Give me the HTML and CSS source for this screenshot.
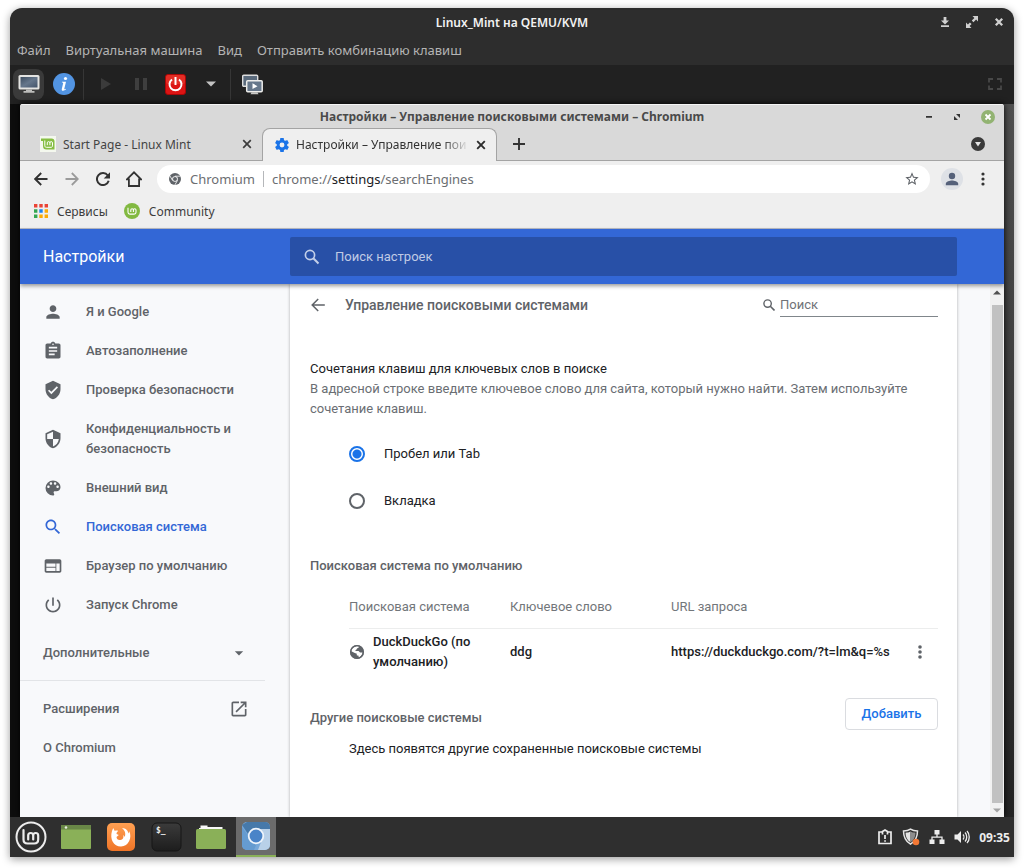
FILE: index.html
```html
<!DOCTYPE html>
<html lang="ru">
<head>
<meta charset="utf-8">
<title>Linux_Mint на QEMU/KVM</title>
<link rel="stylesheet" href="styles.css">
</head>
<body>
<div class="vm">
  <header class="vm-title">
    <h1>Linux_Mint на QEMU/KVM</h1>
    <div class="vm-controls">
      <button aria-label="Свернуть"><svg width="10" height="12" viewBox="0 0 10 12"><path d="M3.6 1h2.8v3.5H9L5 8.6 1 4.500h2.600zM1 9.300h8V11H1z" fill="#d0d0d0"/></svg></button>
      <button aria-label="Развернуть"><svg width="14" height="14" viewBox="0 0 14 14"><path d="M7.500 1H13v5.500l-1.900-1.900-2.700 2.600-1.600-1.600 2.600-2.700zM1 7.500l1.900 1.900 2-2 1.700 1.700-2 2L6.500 13H1z" fill="#d0d0d0"/></svg></button>
      <button aria-label="Закрыть"><svg width="10" height="10" viewBox="0 0 10 10"><path d="M1.800 1.800l6.400 6.400M8.200 1.800L1.800 8.200" stroke="#d0d0d0" stroke-width="2.300"/></svg></button>
    </div>
  </header>
  <nav class="vm-menu">
    <button>Файл</button><button>Виртуальная машина</button><button>Вид</button><button>Отправить комбинацию клавиш</button>
  </nav>
  <div class="vm-tools">
    <button class="tool pressed" aria-label="Консоль"><svg width="22" height="20" viewBox="0 0 22 20"><defs><linearGradient id="scr" x1="0" y1="0" x2="1" y2="1"><stop offset="0" stop-color="#3d4d60"/><stop offset=".5" stop-color="#66778c"/><stop offset="1" stop-color="#44546a"/></linearGradient></defs><rect x=".5" y="1" width="21" height="14.500" rx="1.500" fill="#e4e4e2"/><rect x="2.500" y="3" width="17" height="10.500" fill="url(#scr)"/><path d="M8 15.500h6V17h2.500v1.800h-11V17H8z" fill="#bdbdbb"/></svg></button>
    <button class="tool" aria-label="Сведения"><svg width="22" height="22" viewBox="0 0 22 22"><circle cx="11" cy="11" r="11" fill="#5294e2"/><circle cx="12.500" cy="5.500" r="1.600" fill="#fff"/><path d="M9 8.700h4l-1.700 7c-.2.800.4.800 1.300.1l.4.500c-2 2-4.700 2-4.200-.4l1.400-5.800c.1-.5-.2-.7-1.300-.7z" fill="#fff"/></svg></button>
    <span class="sep"></span>
    <button class="tool" aria-label="Запустить"><svg width="12" height="14" viewBox="0 0 12 14"><path d="M1 1l10 6-10 6z" fill="#3b3b3b"/></svg></button>
    <button class="tool" aria-label="Приостановить"><svg width="12" height="12" viewBox="0 0 12 12"><path d="M0 0h4v12H0zM8 0h4v12H8z" fill="#3f3f3f"/></svg></button>
    <button class="tool" aria-label="Выключить"><svg width="21" height="21" viewBox="0 0 21 21"><rect x=".5" y=".5" width="20" height="20" rx="2.500" fill="#dc1414" stroke="#ac0606"/><rect x="1" y="1" width="19" height="9" rx="2" fill="#e83d31" opacity=".6"/><path d="M7 5.500a6 6 0 1 0 7 0M10.500 3v8" fill="none" stroke="#fff" stroke-width="2"/></svg></button>
    <button class="tool" aria-label="Варианты выключения"><svg width="10" height="6" viewBox="0 0 10 6"><path d="M0 .5h10L5 5.500z" fill="#c3c3c3"/></svg></button>
    <span class="sep"></span>
    <button class="tool" aria-label="Снимки"><svg width="21" height="21" viewBox="0 0 21 21"><rect x=".7" y="1.200" width="15" height="11" rx="1" fill="#5a6a7c" stroke="#ddd" stroke-width="1.400"/><rect x="4.700" y="6.700" width="15.500" height="11" rx="1" fill="#66778b" stroke="#ededeb" stroke-width="1.500"/><path d="M10.500 9.300l5 2.900-5 2.900z" fill="#fff"/><path d="M9.500 18.200h6l1 2h-8z" fill="#c8c8c6"/></svg></button>
    <button class="tool end" aria-label="Полный экран"><svg width="14" height="12" viewBox="0 0 14 12"><path d="M1 4.500V1h4M9 1h4v3.500M13 7.500V11H9M5 11H1V7.500" fill="none" stroke="#484848" stroke-width="1.800"/></svg></button>
  </div>

  <div class="guest">
    <div class="browser">
      <header class="win-title">
        <h2>Настройки – Управление поисковыми системами – Chromium</h2>
        <div class="win-controls">
          <button aria-label="Свернуть"><svg width="8" height="8" viewBox="0 0 8 8"><path d="M1 3h6v1.700H1z" fill="#333"/></svg></button>
          <button aria-label="Развернуть"><svg width="8" height="8" viewBox="0 0 8 8"><path d="M3 1h4v4zM1 3l4 4H1z" fill="#333"/></svg></button>
          <button aria-label="Закрыть"><svg width="14" height="14" viewBox="0 0 14 14"><circle cx="7" cy="7" r="7" fill="#92b372"/><path d="M4.500 4.500l5 5M9.500 4.500l-5 5" stroke="#fff" stroke-width="1.800"/></svg></button>
        </div>
      </header>
      <div class="tabs">
        <div class="tab">
          <svg width="16" height="16" viewBox="0 0 16 16"><rect width="16" height="16" fill="#f4f8ee"/><path d="M1 2.500h10.500a3 3 0 0 1 3 3v8h-8a3.500 3.500 0 0 1-3.500-3.500V5H1z" fill="#86be43"/><path d="M4.800 4.500v5.200c0 1 .6 1.600 1.600 1.600h4.700c.8 0 1.400-.6 1.400-1.500V6.900a1.300 1.300 0 0 0-2.600 0v2.300M9.900 6.900a1.300 1.300 0 0 0-2.600 0v2.300" fill="none" stroke="#fff" stroke-width="1"/></svg>
          <span class="tab-text">Start Page - Linux Mint</span>
          <button aria-label="Закрыть вкладку"><svg width="10" height="10" viewBox="0 0 10 10"><path d="M1.200 1.200l7.600 7.600M8.800 1.200L1.200 8.800" stroke="#3c3c3c" stroke-width="1.700"/></svg></button>
        </div>
        <div class="tab active">
          <svg width="14" height="14" viewBox="2 2 20 20"><path fill="#1a73e8" fill-rule="evenodd" d="M19.430 12.980c.04-.32.07-.64.07-.98s-.03-.66-.07-.98l2.110-1.650c.19-.15.24-.42.12-.64l-2-3.460c-.12-.22-.39-.3-.61-.22l-2.490 1c-.52-.4-1.080-.73-1.690-.98l-.38-2.650C14.460 2.180 14.250 2 14 2h-4c-.25 0-.46.18-.49.42l-.38 2.650c-.61.25-1.170.59-1.690.98l-2.490-1c-.23-.09-.49 0-.61.22l-2 3.460c-.13.22-.07.49.12.64l2.110 1.650c-.04.32-.07.65-.07.98s.03.66.07.98l-2.110 1.650c-.19.15-.24.42-.12.64l2 3.460c.12.22.39.3.61.22l2.490-1c.52.4 1.080.73 1.690.98l.38 2.650c.03.24.24.42.49.42h4c.25 0 .46-.18.49-.42l.38-2.650c.61-.25 1.170-.59 1.690-.98l2.490 1c.23.09.49 0 .61-.22l2-3.460c.12-.22.07-.49-.12-.64zM12 15.500a3.500 3.500 0 1 1 0-7 3.500 3.500 0 0 1 0 7z"/></svg>
          <span class="tab-text">Настройки – Управление пои</span>
          <button aria-label="Закрыть вкладку"><svg width="10" height="10" viewBox="0 0 10 10"><path d="M1.200 1.200l7.600 7.600M8.800 1.200L1.200 8.800" stroke="#2c2c2c" stroke-width="1.900"/></svg></button>
        </div>
        <button class="new-tab" aria-label="Новая вкладка"><svg width="12" height="12" viewBox="0 0 12 12"><path d="M6 0v12M0 6h12" stroke="#333" stroke-width="1.900"/></svg></button>
        <button class="tab-search" aria-label="Поиск вкладок"><svg width="14" height="14" viewBox="0 0 14 14"><circle cx="7" cy="7" r="7" fill="#3a3a3a"/><path d="M4 5h6L7 9.500z" fill="#e4e4e4"/></svg></button>
      </div>
      <div class="nav">
        <button aria-label="Назад"><svg width="14" height="14" viewBox="0 0 14 14"><path d="M13.500 7H1.500M7.200 1L1.200 7l6 6" fill="none" stroke="#333" stroke-width="1.900"/></svg></button>
        <button aria-label="Вперёд"><svg width="14" height="14" viewBox="0 0 14 14"><path d="M.5 7h12M6.800 1l6 6-6 6" fill="none" stroke="#9b9b9b" stroke-width="1.800"/></svg></button>
        <button aria-label="Обновить"><svg width="14" height="14" viewBox="0 0 14 14"><path d="M11.800 3.500A6 6 0 1 0 12.700 8.800" fill="none" stroke="#333" stroke-width="2"/><path d="M14 .2v6.300H7.700z" fill="#333"/></svg></button>
        <button aria-label="Домой"><svg width="16" height="16" viewBox="0 0 16 16"><path d="M.9 8.300L8 1.300l7.100 7h-2V15H2.900V8.300z" fill="none" stroke="#333" stroke-width="1.800"/></svg></button>
        <div class="omnibox">
          <svg width="12" height="12" viewBox="0 0 12 12"><circle cx="6" cy="6" r="6" fill="#5f6368"/><path d="M6 3.200h5.500M3.500 7.400L.9 2.800M8.500 7.400L5.800 12" stroke="#fff" stroke-width=".8"/><circle cx="6" cy="6" r="2.800" fill="#fff"/><circle cx="6" cy="6" r="2" fill="#5f6368"/></svg>
          <span class="chip">Chromium</span>
          <span class="url" role="textbox" aria-label="Адрес">chrome://<b>settings</b>/searchEngines</span>
          <button class="star" aria-label="Добавить в закладки"><svg width="16" height="16" viewBox="0 0 24 24"><path fill="#5f6368" d="M22 9.240l-7.190-.62L12 2 9.190 8.630 2 9.240l5.460 4.730L5.820 21 12 17.270 18.180 21l-1.630-7.030L22 9.240zM12 15.400l-3.760 2.270 1-4.280-3.320-2.880 4.380-.38L12 6.100l1.710 4.040 4.380.38-3.320 2.880 1 4.280L12 15.400z"/></svg></button>
        </div>
        <button class="avatar" aria-label="Профиль"><svg width="22" height="22" viewBox="0 0 22 22"><circle cx="11" cy="11" r="11" fill="#dee1e6"/><circle cx="11" cy="8" r="3.200" fill="#55617a"/><path d="M4.800 17.200v-1.500c0-2.200 4.100-3.200 6.200-3.200s6.200 1 6.200 3.200v1.500z" fill="#55617a"/></svg></button>
        <button class="more" aria-label="Меню"><svg width="4" height="14" viewBox="0 0 4 14"><circle cx="2" cy="2" r="1.600" fill="#333"/><circle cx="2" cy="7" r="1.600" fill="#333"/><circle cx="2" cy="12" r="1.600" fill="#333"/></svg></button>
      </div>
      <nav class="bookmarks">
        <a href="#apps"><svg width="14" height="14" viewBox="0 0 14 14"><path d="M0 0h3.400v3.400H0zM5.300 0h3.400v3.400H5.300zM10.600 0H14v3.400h-3.400z" fill="#ea4335"/><path d="M0 5.300h3.400v3.400H0zM0 10.600h3.400V14H0z" fill="#34a853"/><path d="M5.300 5.300h3.400v3.400H5.300z" fill="#1a83f0"/><path d="M10.600 5.300H14v3.400h-3.400zM5.300 10.600h3.400V14H5.300zM10.600 10.600H14V14h-3.400z" fill="#fbab05"/></svg>Сервисы</a>
        <a href="#community"><svg width="16" height="16" viewBox="0 0 16 16"><circle cx="8" cy="8" r="8" fill="#82b941"/><path d="M4 4.800v4.400c0 1.300.7 1.900 1.900 1.900h4.200c1.200 0 1.900-.7 1.900-1.900V7.100a1.300 1.300 0 0 0-2.600 0v2M9.400 7.100a1.300 1.300 0 0 0-2.600 0v2" fill="none" stroke="#fff" stroke-width="1.100"/></svg>Community</a>
      </nav>

      <div class="settings-bar">
        <h2>Настройки</h2>
        <label class="settings-search">
          <svg width="16" height="16" viewBox="0 0 16 16"><circle cx="6" cy="6" r="4.600" fill="none" stroke="#c3cfe9" stroke-width="1.700"/><path d="M9.300 9.300l5.200 5.200" stroke="#c3cfe9" stroke-width="2"/></svg>
          <input type="search" placeholder="Поиск настроек" aria-label="Поиск настроек">
        </label>
      </div>

      <div class="settings">
        <nav class="side">
          <a href="#people"><svg viewBox="0 0 24 24"><path d="M12 12c2.210 0 4-1.790 4-4s-1.790-4-4-4-4 1.790-4 4 1.790 4 4 4zm0 2c-2.670 0-8 1.340-8 4v2h16v-2c0-2.660-5.330-4-8-4z"/></svg>Я и Google</a>
          <a href="#autofill"><svg viewBox="0 0 24 24"><path d="M19 3h-4.180C14.400 1.840 13.300 1 12 1s-2.400.84-2.820 2H5c-1.100 0-2 .9-2 2v14c0 1.100.9 2 2 2h14c1.100 0 2-.9 2-2V5c0-1.100-.9-2-2-2zm-7 0c.55 0 1 .45 1 1s-.45 1-1 1-1-.45-1-1 .45-1 1-1zm2 14H7v-2h7v2zm3-4H7v-2h10v2zm0-4H7V7h10v2z"/></svg>Автозаполнение</a>
          <a href="#check"><svg viewBox="0 0 24 24"><path d="M12 1L3 5v6c0 5.550 3.840 10.740 9 12 5.160-1.260 9-6.450 9-12V5l-9-4zm-2 16l-4-4 1.410-1.410L10 14.170l6.590-6.590L18 9l-8 8z"/></svg>Проверка безопасности</a>
          <a href="#privacy"><svg viewBox="0 0 24 24"><path d="M12 1L3 5v6c0 5.550 3.840 10.740 9 12 5.160-1.260 9-6.450 9-12V5l-9-4zm0 10.990h7c-.53 4.120-3.280 7.790-7 8.940V12H5V6.300l7-3.110v8.800z"/></svg><span>Конфиденциальность и безопасность</span></a>
          <a href="#appearance"><svg viewBox="0 0 24 24"><path d="M12 3a9 9 0 0 0 0 18c.83 0 1.500-.67 1.500-1.500 0-.39-.15-.74-.39-1.010-.23-.26-.38-.61-.38-.99 0-.83.67-1.500 1.500-1.500H16c2.760 0 5-2.240 5-5 0-4.420-4.030-8-9-8zm-5.500 9c-.83 0-1.500-.67-1.500-1.500S5.670 9 6.500 9 8 9.670 8 10.500 7.330 12 6.500 12zm3-4C8.670 8 8 7.330 8 6.500S8.670 5 9.500 5s1.500.67 1.500 1.500S10.330 8 9.500 8zm5 0c-.83 0-1.500-.67-1.500-1.500S13.670 5 14.500 5s1.500.67 1.500 1.500S15.330 8 14.500 8zm3 4c-.83 0-1.500-.67-1.500-1.500S16.670 9 17.500 9s1.500.67 1.500 1.500-.67 1.500-1.500 1.500z"/></svg>Внешний вид</a>
          <a href="#search" class="current"><svg viewBox="0 0 24 24"><path d="M15.500 14h-.79l-.28-.27C15.410 12.590 16 11.110 16 9.500 16 5.910 13.090 3 9.500 3S3 5.910 3 9.500 5.910 16 9.500 16c1.610 0 3.090-.59 4.230-1.570l.27.28v.79l5 4.990L20.490 19l-4.990-5zm-6 0C7.010 14 5 11.990 5 9.500S7.010 5 9.500 5 14 7.010 14 9.500 11.990 14 9.500 14z"/></svg>Поисковая система</a>
          <a href="#default"><svg viewBox="0 0 24 24"><path d="M20 4H4c-1.100 0-1.990.9-1.990 2L2 18c0 1.100.9 2 2 2h16c1.100 0 2-.9 2-2V6c0-1.100-.9-2-2-2zm-5 14H4v-4h11v4zm0-5H4V9h11v4zm5 5h-4V9h4v9z"/></svg>Браузер по умолчанию</a>
          <a href="#startup"><svg viewBox="0 0 24 24"><path d="M13 3h-2v10h2V3zm4.830 2.170l-1.420 1.420C17.990 7.860 19 9.810 19 12c0 3.870-3.130 7-7 7s-7-3.130-7-7c0-2.190 1.010-4.140 2.580-5.420L6.170 5.170C4.230 6.820 3 9.260 3 12c0 4.970 4.030 9 9 9s9-4.030 9-9c0-2.740-1.230-5.180-3.170-6.830z"/></svg>Запуск Chrome</a>
          <button class="side-more">Дополнительные<svg viewBox="0 0 24 24"><path d="M7 10l5 5 5-5z"/></svg></button>
          <hr>
          <a href="#extensions" class="plain">Расширения<svg viewBox="0 0 24 24"><path d="M19 19H5V5h7V3H5c-1.110 0-2 .9-2 2v14c0 1.100.89 2 2 2h14c1.100 0 2-.9 2-2v-7h-2v7zM14 3v2h3.590l-9.830 9.830 1.410 1.410L19 6.410V10h2V3h-7z"/></svg></a>
          <a href="#about" class="plain">О Chromium</a>
        </nav>
        <main class="page">
          <div class="page-head">
            <button aria-label="Назад"><svg width="14" height="14" viewBox="0 0 14 14"><path d="M13.800 7H1.500M7.200 1L1.200 7l6 6" fill="none" stroke="#5f6368" stroke-width="1.500"/></svg></button>
            <h3>Управление поисковыми системами</h3>
            <label class="find">
              <svg width="12" height="12" viewBox="0 0 12 12"><circle cx="4.600" cy="4.600" r="3.700" fill="none" stroke="#5f6368" stroke-width="1.400"/><path d="M7.300 7.300l4.200 4.200" stroke="#5f6368" stroke-width="1.600"/></svg>
              <input type="search" placeholder="Поиск" aria-label="Поиск">
            </label>
          </div>
          <section class="shortcut">
            <h4>Сочетания клавиш для ключевых слов в поиске</h4>
            <p>В адресной строке введите ключевое слово для сайта, который нужно найти. Затем используйте сочетание клавиш.</p>
            <div class="radios">
              <label><input type="radio" name="key" checked>Пробел или Tab</label>
              <label><input type="radio" name="key">Вкладка</label>
            </div>
          </section>
          <section class="default">
            <h4>Поисковая система по умолчанию</h4>
            <table>
              <thead><tr><th>Поисковая система</th><th>Ключевое слово</th><th colspan="2">URL запроса</th></tr></thead>
              <tbody><tr>
                <td><div class="engine"><svg width="16" height="16" viewBox="0 0 16 16"><circle cx="8" cy="8" r="7" fill="#5f6368"/><path d="M9.800 2.300c.3 1.200-.3 1.700-1.500 2-.6.200-.3 1.200-1.200 1.400-.8.200-.8.700-.4 1.200h2.600c1 0 1 1.600 2 1.600h2.300c-.3 2.400-1.700 4.200-4 4.800.2-1.300-.1-1.700-1.100-1.700-.9 0-.9-.9-.6-1.800L5.800 9 2.300 7.300C2.500 4.500 4.900 2 9.800 2.300z" fill="#fff"/><circle cx="8" cy="8" r="6.300" fill="none" stroke="#5f6368" stroke-width="1.300"/></svg><span>DuckDuckGo (по умолчанию)</span></div></td>
                <td>ddg</td>
                <td>https://duckduckgo.com/?t=lm&amp;q=%s</td>
                <td><button aria-label="Действия"><svg width="4" height="14" viewBox="0 0 4 14"><circle cx="2" cy="2" r="1.800" fill="#5f6368"/><circle cx="2" cy="7" r="1.800" fill="#5f6368"/><circle cx="2" cy="12" r="1.800" fill="#5f6368"/></svg></button></td>
              </tr></tbody>
            </table>
          </section>
          <section class="others">
            <div class="others-head"><h4>Другие поисковые системы</h4><button class="add">Добавить</button></div>
            <p>Здесь появятся другие сохраненные поисковые системы</p>
          </section>
        </main>
        <div class="scroll">
          <svg width="8" height="5" viewBox="0 0 8 5"><path d="M0 4.500h8L4 .5z" fill="#505050"/></svg>
          <span class="thumb"></span>
          <svg width="8" height="5" viewBox="0 0 8 5"><path d="M0 .5h8L4 4.500z" fill="#a3a3a3"/></svg>
        </div>
      </div>
    </div>
  </div>

  <footer class="panel">
    <button aria-label="Меню"><svg width="32" height="32" viewBox="0 0 32 32"><circle cx="16" cy="16" r="14.500" fill="#2f2f2f" stroke="#ededed" stroke-width="2"/><path d="M8.500 9v9.500c0 2.500 1.500 4 4 4h6.700c2.500 0 4-1.600 4-4v-4a2.500 2.500 0 0 0-5 0v4M18.200 14.500a2.500 2.500 0 0 0-5 0v4" fill="none" stroke="#ededed" stroke-width="2.200" stroke-linecap="round"/></svg></button>
    <button aria-label="Рабочий стол"><svg width="32" height="32" viewBox="0 0 32 32"><rect x="1" y="4" width="30" height="24" rx="1" fill="#8ab058"/><path d="M1 4h30v4.500H1z" fill="#698747"/><circle cx="6" cy="6.500" r="1.300" fill="#e7eddf"/></svg></button>
    <button aria-label="Firefox"><svg width="32" height="32" viewBox="0 0 32 32"><defs><linearGradient id="ff" x1="0" y1="0" x2="0" y2="1"><stop offset="0" stop-color="#ffa052"/><stop offset="1" stop-color="#ef7427"/></linearGradient></defs><rect x="2" y="2" width="28" height="28" rx="5" fill="url(#ff)"/><path d="M17 7c4 .2 6 2.500 6.500 5.500l.8-2.200c3 6-.5 15.200-8.300 15.200C8.500 25.500 4.500 18 7 10l1.200-3 1.600 3.100c1.200-.6 2.200-.6 3.400-.2-1.300 1-1.900 2-1.600 3l2.200 1.100-2.300 2c.2 2 1.600 3.300 3.800 3 2.500-.2 3.900-2.700 2.700-4.700 1 .2 1.500.9 1.700 1.700 1.400-3.600.2-6.500-2.700-9z" fill="#fff"/></svg></button>
    <button aria-label="Терминал"><svg width="32" height="32" viewBox="0 0 32 32"><defs><linearGradient id="tm" x1="0" y1="0" x2="0" y2="1"><stop offset="0" stop-color="#3b3b3b"/><stop offset="1" stop-color="#1d1d1d"/></linearGradient></defs><rect x="2" y="2" width="29" height="28" rx="5" fill="url(#tm)" stroke="#161616"/><text x="6" y="12" class="prompt">$_</text></svg></button>
    <button aria-label="Файлы"><svg width="32" height="32" viewBox="0 0 32 32"><path d="M4 7h1.500V4.500h7V6H27.500V12H4z" fill="#f7f7f7"/><rect x="1" y="8" width="30" height="20" rx="1.500" fill="#8ab058"/></svg></button>
    <button class="running" aria-label="Chromium"><svg width="32" height="32" viewBox="0 0 32 32"><rect x="2" y="2" width="28" height="28" rx="5" fill="#77a8d9"/><path d="M7 2h18a5 5 0 0 1 5 5v2H16L8 14 2 5z" fill="#4679aa"/><path d="M16 9h14v16a5 5 0 0 1-5 5h-7l5-13z" fill="#b8d0e8"/><path d="M2 7l7 10 8 6-3 7H7a5 5 0 0 1-5-5z" fill="#659bd0"/><circle cx="16" cy="16" r="7.300" fill="#4a84c8" stroke="#eef4fb" stroke-width="1.800"/></svg></button>
    <div class="tray">
      <button aria-label="Отчёты"><svg width="16" height="16" viewBox="0 0 16 16"><path d="M5 3H2v11.500h12V3h-3M5.500 5.500v-3L8 1l2.500 1.500v3M8 6v4" fill="none" stroke="#ededed" stroke-width="1.700"/><path d="M7.200 11.200h1.700v1.600H7.200z" fill="#ededed"/></svg></button>
      <button aria-label="Обновления"><svg width="18" height="18" viewBox="0 0 18 18"><path d="M8.500 1.200c2 1.300 4.500 1.800 7 1.800 0 5.500-1.500 10-7 13.200C3 13 1.500 8.500 1.500 3c2.500 0 5-.5 7-1.800z" fill="none" stroke="#e5e5e5" stroke-width="1.500"/><path d="M8.500 3.500v10.700C5 12 3.600 8.800 3.500 4.700c2 0 3.600-.4 5-1.200z" fill="#e5e5e5"/><path d="M8.500 3.500v10.700c3.500-2.200 4.900-5.400 5-9.500-2 0-3.600-.4-5-1.200z" fill="#8d8d8d"/><circle cx="14" cy="14" r="3.300" fill="#f27835"/></svg></button>
      <button aria-label="Сеть"><svg width="16" height="16" viewBox="0 0 16 16"><path d="M5.500 1h5v4.500h-5zM.5 10.500h5V15h-5zM10.500 10.500h5V15h-5z" fill="#ededed"/><path d="M8 5v3.500M3 11V8.200h10V11" fill="none" stroke="#ededed" stroke-width="1.300"/></svg></button>
      <button aria-label="Громкость"><svg width="16" height="16" viewBox="0 0 16 16"><path d="M.5 5.500h3L7 2v12l-3.500-3.500h-3z" fill="#ededed"/><path d="M9 5.500c1.200 1.300 1.200 3.700 0 5M11 3.500c2.300 2.300 2.300 6.700 0 9M13 2c3 3.200 3 8.800 0 12" fill="none" stroke="#ededed" stroke-width="1.300"/></svg></button>
      <time>09:35</time>
    </div>
  </footer>
</div>
</body>
</html>
```

FILE: styles.css
```css
* { box-sizing: border-box; }
body { margin: 0; background: #fff; font-family: Roboto, "Liberation Sans", sans-serif; font-size: 13px; color: #202124; }
button { display: flex; align-items: center; justify-content: center; padding: 0; border: 0; background: none; color: inherit; font: inherit; }
h1, h2, h3, h4, p { margin: 0; }
a { color: inherit; text-decoration: none; }
input { font: inherit; color: inherit; border: 0; background: none; outline: none; padding: 0; min-width: 0; }
svg { display: block; flex: none; }

.vm { display: flex; flex-direction: column; min-height: calc(100vh - 19px); margin: 8px 10px 11px; border-radius: 12px 12px 0 0; overflow: hidden; background: #2d2d2d; box-shadow: 0 2px 8px rgba(0,0,0,.4); }
.vm-title { display: grid; grid-template-columns: 1fr auto 1fr; align-items: center; height: 28px; padding: 0 10px; font-family: "Noto Sans", sans-serif; }
.vm-title h1 { grid-column: 2; font-size: 12px; font-weight: 600; color: #f2f2f2; }
.vm-controls { display: flex; justify-content: flex-end; align-items: center; gap: 15px; }
.vm-menu { display: flex; gap: 15px; height: 29px; padding: 0 7px 2px; color: #b4b4b4; font-family: "Noto Sans", sans-serif; font-size: 13px; }
.vm-tools { display: flex; align-items: center; height: 39px; padding: 0 4px 1px 3px; background: #212121; }
.tool { width: 31px; height: 31px; margin-right: 4px; border-radius: 8px; }
.tool.pressed { background: #3a3a3a; }
.tool.end { margin-left: auto; margin-right: 0; }
.sep { width: 1px; height: 31px; margin-right: 6px; background: #363636; }

.guest { display: flex; flex: 1; padding: 0 10px; background: linear-gradient(90deg, #0d0d0d 50%, transparent 50%), linear-gradient(#505050, #232323); }
.browser { display: flex; flex-direction: column; flex: 1; min-width: 0; border-radius: 3px 3px 0 0; overflow: hidden; background: #efefef; font-family: "Noto Sans", sans-serif; box-shadow: 0 0 6px #000; }
.win-title { display: grid; grid-template-columns: 1fr auto 1fr; height: 24px; padding: 0 9px; background: #d9d9d9; border-top: 1px solid #f4f4f4; align-items: center; }
.win-title h2 { grid-column: 2; font-size: 12px; line-height: 24px; font-weight: 700; color: #4a4a4a; }
.win-controls { display: flex; gap: 20px; align-items: center; justify-content: flex-end; }
.tabs { display: flex; align-items: flex-end; height: 33px; padding-left: 10px; background: #d9d9d9; border-bottom: 1px solid #a4a4a4; font-size: 12px; color: #444; }
.tab { display: flex; align-items: center; gap: 7px; width: 232px; height: 32px; padding: 0 10px; }
.tab-text { flex: 1; min-width: 0; overflow: hidden; white-space: nowrap; }
.tab.active { width: 235px; margin-bottom: -1px; height: 33px; border: 1px solid #a4a4a4; border-bottom: 0; border-radius: 8px 8px 0 0; background: #efefef; padding: 0 10px 1px 12px; color: #333; }
.tab.active .tab-text { -webkit-mask-image: linear-gradient(90deg, #000 85%, transparent); mask-image: linear-gradient(90deg, #000 85%, transparent); }
.new-tab { width: 44px; height: 32px; }
.tab-search { width: 52px; height: 32px; margin-left: auto; }
.nav { display: flex; align-items: center; gap: 1px; height: 35px; padding: 0 6px; }
.nav > button { width: 30px; height: 30px; }
.omnibox { display: flex; flex: 1; align-items: center; height: 28px; margin: 0 6px 0 7px; padding: 0 10px 0 12px; border-radius: 14px; background: #fff; font-size: 13px; color: #6b6e72; }
.chip { margin-left: 9px; padding-right: 8px; border-right: 1px solid #b5b7ba; line-height: 16px; }
.url { flex: 1; margin-left: 8px; }
.url b { font-weight: 400; color: #202124; }
.bookmarks { display: flex; gap: 16px; height: 33px; padding: 0 14px 2px; border-bottom: 1px solid #b9bdc6; font-size: 12px; color: #3c3c3c; }
.bookmarks a { display: flex; align-items: center; gap: 9px; }

.settings-bar { display: grid; grid-template-columns: 270px 1fr; align-items: center; height: 55px; padding-right: 47px; background: #3367d6; color: #fff; font-family: Roboto, sans-serif; box-shadow: 0 2px 4px rgba(0,0,0,.4); z-index: 1; }
.settings-bar h2 { padding-left: 23px; font-size: 16px; font-weight: 400; }
.settings-search { display: flex; align-items: center; height: 39px; gap: 15px; padding: 0 14px; border-radius: 2px; background: #2850a7; }
.settings-search input { flex: 1; }
.settings-search input::placeholder { color: #c0cbe5; opacity: 1; }

.settings { display: grid; grid-template-columns: 270px 1fr 47px; flex: 1; background: #f8f9fb; font-family: Roboto, sans-serif; }
.side { padding-top: 8px; font-weight: 500; line-height: 20px; color: #5f6368; }
.side a, .side-more { display: flex; align-items: center; width: 100%; gap: 23px; padding: 10px 31px 9px 23px; }
.side svg { width: 20px; height: 20px; fill: #5f6368; }
.side .current { color: #3367d6; }
.side .current svg { fill: #3367d6; }
.side-more { justify-content: space-between; margin-top: 9px; }
.side .plain { justify-content: space-between; }
.side hr { width: 245px; margin: 8px 0; border: 0; border-top: 1px solid #e2e4e7; }
.side .side-more, .side .plain { padding-right: 41px; }
.side .plain { height: 39px; }

.page { padding: 0 19px 0 20px; background: #fff; box-shadow: 0 0 3px rgba(0,0,0,.3); line-height: 20px; }
.page-head { display: flex; align-items: center; height: 41px; }
.page-head button { width: 16px; height: 16px; }
.page-head h3 { margin-left: 19px; font-size: 14px; font-weight: 500; color: #5f6368; }
.find { display: flex; align-items: center; gap: 5px; margin-left: auto; color: #5f6368; }
.find input { width: 158px; height: 24px; border-bottom: 1px solid #80868b; }
.find input::placeholder { color: #6f7377; opacity: 1; }
.shortcut { padding-top: 34px; }
.shortcut h4 { font-weight: 400; font-size: 13px; }
.shortcut p { color: #6a6e73; }
.radios { display: grid; gap: 27px; padding: 25px 0 0 39px; }
.radios label { display: flex; align-items: center; gap: 19px; }
.radios input { appearance: none; width: 16px; height: 16px; margin: 0; border: 2px solid #5f6368; border-radius: 50%; }
.radios input:checked { border-color: #1a73e8; background: radial-gradient(circle, #1a73e8 4px, transparent 5px); }
.default { padding-top: 45px; }
.default h4, .others h4 { font-size: 13px; font-weight: 500; color: #5f6368; }
table { width: calc(100% - 39px); margin: 10px 0 0 39px; border-collapse: collapse; table-layout: fixed; }
th { height: 42px; padding: 0; text-align: left; font-weight: 400; color: #72767a; border-bottom: 1px solid #eceded; }
th:nth-child(1), th:nth-child(2) { width: 161px; }
td { height: 47px; padding: 0; font-weight: 500; white-space: nowrap; }
td:last-child button { width: 36px; height: 30px; margin-left: auto; }
.engine { display: flex; align-items: center; gap: 8px; white-space: normal; padding-right: 25px; }
.others { padding-top: 23px; }
.others-head { display: flex; justify-content: space-between; align-items: center; }
.others-head h4 { padding-top: 8px; }
.add { width: 93px; height: 32px; border: 1px solid #dadce0; border-radius: 4px; color: #1a73e8; font-weight: 500; }
.others p { padding: 9px 0 0 39px; }

.scroll { display: flex; flex-direction: column; align-items: center; width: 14px; margin-left: auto; padding: 6px 2px 4px; background: #f1f1f1; }
.thumb { flex: 1; width: 11px; margin: 10px 0 5px; background: #c1c1c1; }

.panel { display: flex; align-items: center; gap: 5px; height: 40px; padding-left: 1px; background: #2f2f2f; }
.panel > button { width: 40px; height: 40px; }
.panel .running { background: #6b6b6b; border-bottom: 2px solid #8ab058; }
.prompt { font: bold 8px "DejaVu Sans Mono", monospace; fill: #ededed; }
.tray { display: flex; align-items: center; gap: 9px; margin-left: auto; padding-right: 4px; color: #ededed; font: 700 12px "Noto Sans", sans-serif; }
```
